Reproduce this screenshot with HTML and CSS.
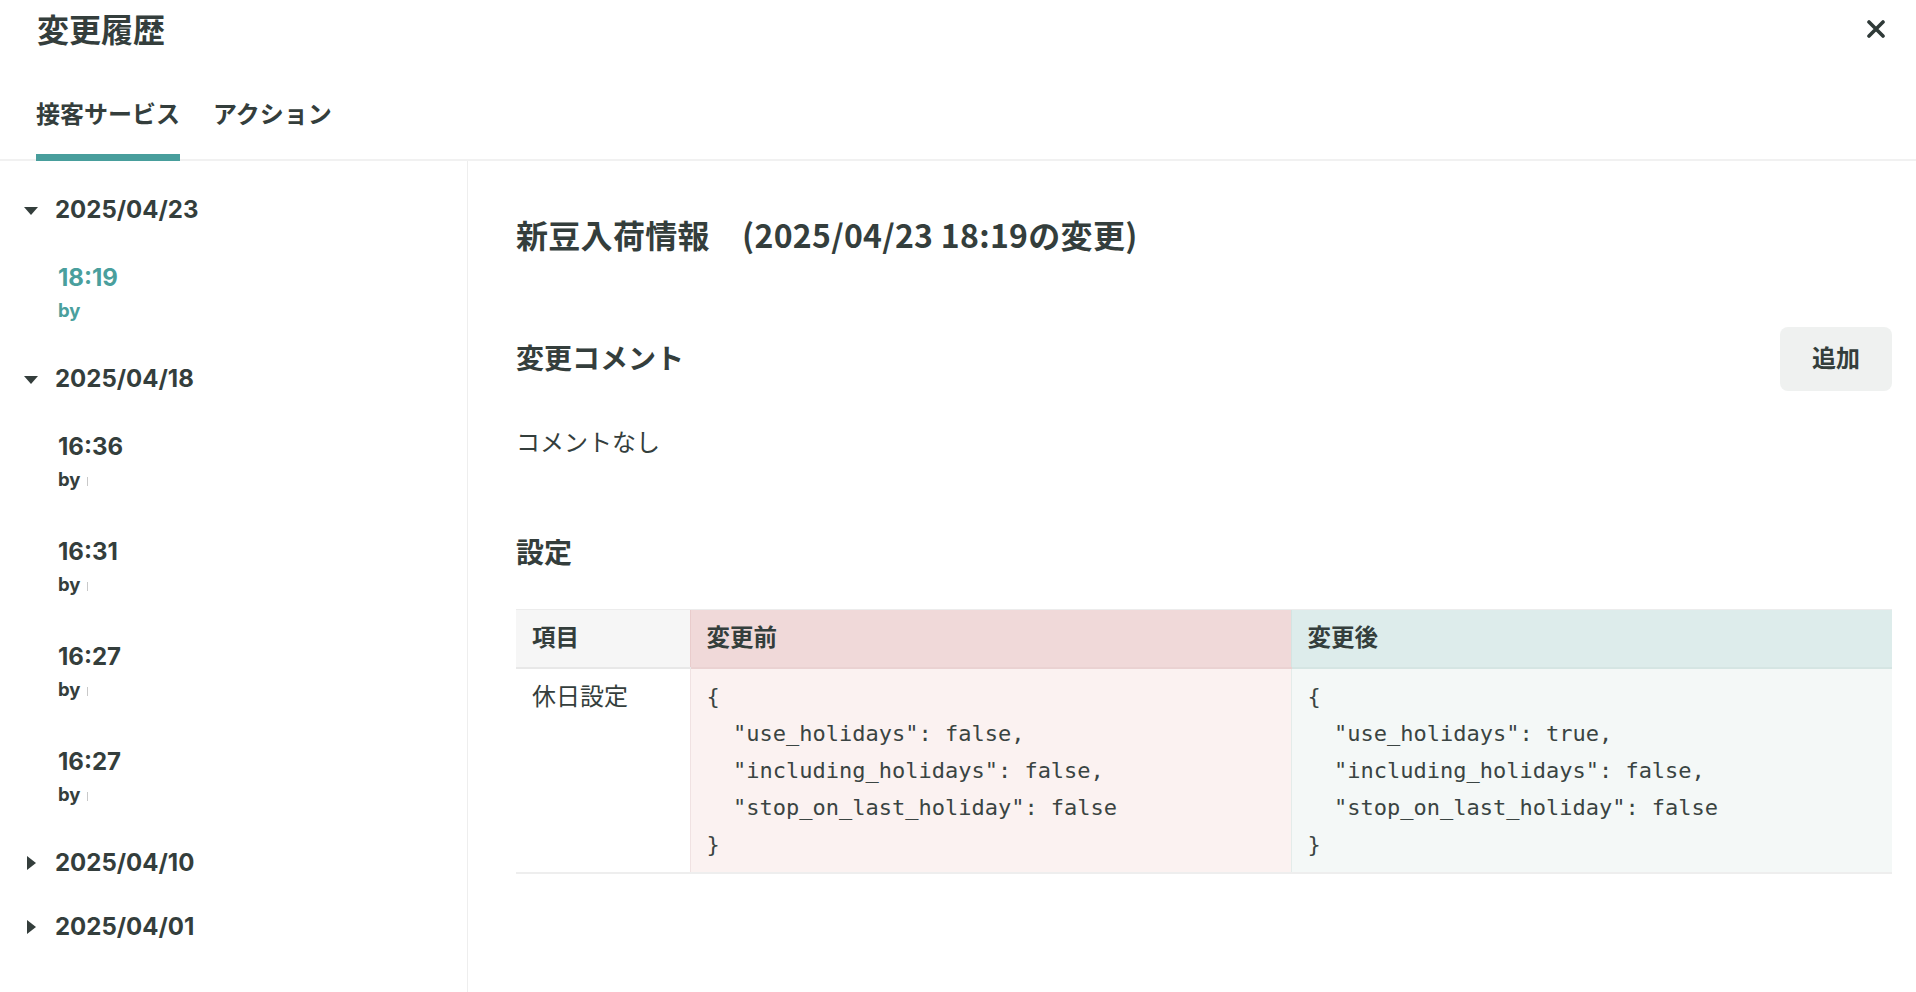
FILE: index.html
```html
<!DOCTYPE html>
<html lang="ja">
<head>
<meta charset="utf-8">
<title>変更履歴</title>
<link rel="stylesheet" href="styles.css">
</head>
<body>
<div class="panel">
  <header class="head">
    <div class="head-top">
      <h1 class="title">変更履歴</h1>
      <button class="close" type="button" aria-label="閉じる">
        <svg width="18" height="18" viewBox="0 0 18 18"><path d="M2 2 L16 16 M16 2 L2 16" stroke="#2f3a38" stroke-width="3.6" stroke-linecap="round" fill="none"/></svg>
      </button>
    </div>
    <nav class="tabs">
      <span class="tab active">接客サービス</span>
      <span class="tab">アクション</span>
    </nav>
  </header>
  <div class="content">
    <aside class="side">
      <div class="date"><span class="caret down"></span><span>2025/04/23</span></div>
      <div class="item current"><div class="time">18:19</div><div class="by">by</div></div>
      <div class="date"><span class="caret down"></span><span>2025/04/18</span></div>
      <div class="item"><div class="time">16:36</div><div class="by">by<span class="user"></span></div></div>
      <div class="item"><div class="time">16:31</div><div class="by">by<span class="user"></span></div></div>
      <div class="item"><div class="time">16:27</div><div class="by">by<span class="user"></span></div></div>
      <div class="item"><div class="time">16:27</div><div class="by">by<span class="user"></span></div></div>
      <div class="date"><span class="caret right"></span><span>2025/04/10</span></div>
      <div class="date"><span class="caret right"></span><span>2025/04/01</span></div>
    </aside>
    <main class="main">
      <h2 class="page-title">新豆入荷情報　(2025/04/23 18:19の変更)</h2>
      <div class="section-head">
        <h3 class="section-title">変更コメント</h3>
        <button class="btn" type="button">追加</button>
      </div>
      <p class="comment">コメントなし</p>
      <h3 class="section-title settings">設定</h3>
      <table class="diff">
        <colgroup><col class="c1"><col><col></colgroup>
        <thead>
          <tr><th class="h-item">項目</th><th class="h-before">変更前</th><th class="h-after">変更後</th></tr>
        </thead>
        <tbody>
          <tr>
            <td class="d-item">休日設定</td>
            <td class="d-before"><pre class="json">{
  "use_holidays": false,
  "including_holidays": false,
  "stop_on_last_holiday": false
}</pre></td>
            <td class="d-after"><pre class="json">{
  "use_holidays": true,
  "including_holidays": false,
  "stop_on_last_holiday": false
}</pre></td>
          </tr>
        </tbody>
      </table>
    </main>
  </div>
</div>
</body>
</html>
```

FILE: styles.css
```css
* { box-sizing: border-box; }
html, body { margin: 0; padding: 0; background: #fff; }
body {
  font-family: "Inter", "Noto Sans CJK JP", sans-serif;
  color: #343e3c;
}
.panel { display: flex; flex-direction: column; height: 100vh; }

.head { flex: none; }
.head-top {
  height: 58px;
  display: flex;
  align-items: center;
  justify-content: space-between;
  padding: 0 31px 0 37px;
}
.title {
  margin: 3px 0 0;
  font-size: 32px;
  font-weight: 700;
  line-height: 48px;
}
.close {
  border: 0;
  background: none;
  padding: 0;
  width: 18px;
  height: 18px;
  display: flex;
}
.tabs {
  display: flex;
  gap: 33px;
  padding: 0 0 0 36px;
  height: 103px;
  border-bottom: 2px solid #f1f1f1;
}
.tab {
  font-size: 24px;
  font-weight: 700;
  line-height: 36px;
  padding-top: 39px;
  color: #343e3c;
}
.tab.active {
  border-bottom: 7px solid #489e9c;
  margin-bottom: -2px;
}

.content { flex: 1; display: flex; min-height: 0; }
.side {
  width: 468px;
  flex: none;
  border-right: 1px solid #eeeeee;
  padding-top: 17px;
}
.date {
  height: 64px;
  display: flex;
  align-items: center;
  padding-left: 19px;
  font-size: 24px;
  font-weight: 700;
  line-height: 64px;
}
.caret {
  width: 24px;
  height: 24px;
  margin-right: 12px;
  display: flex;
  align-items: center;
  justify-content: center;
}
.caret::before {
  content: "";
  display: block;
  width: 0;
  height: 0;
}
.caret.down::before {
  border-left: 7.5px solid transparent;
  border-right: 7.5px solid transparent;
  border-top: 8px solid #343e3c;
  margin-top: 1px;
}
.caret.right::before {
  border-top: 7px solid transparent;
  border-bottom: 7px solid transparent;
  border-left: 9px solid #343e3c;
  margin-left: 0;
}
.item {
  height: 105px;
  padding: 20px 0 0 58px;
}
.time {
  font-size: 24px;
  font-weight: 700;
  line-height: 32px;
}
.by {
  font-size: 18.5px;
  font-weight: 700;
  line-height: 32px;
  display: flex;
  align-items: center;
}
.user {
  display: inline-block;
  width: 1px;
  height: 9px;
  background: #c9c9c9;
  margin-left: 7px;
  margin-top: 4px;
}
.item.current .time, .item.current .by { color: #4a9f9d; }

.main {
  flex: 1;
  min-width: 0;
  padding: 49px 24px 0 48px;
}
.page-title {
  margin: 0;
  font-family: "Noto Sans CJK JP", "Inter", sans-serif;
  font-size: 32px;
  font-weight: 700;
  line-height: 48px;
  letter-spacing: 0.3px;
}
.section-head {
  margin-top: 69px;
  display: flex;
  align-items: center;
  justify-content: space-between;
  height: 64px;
}
.section-title {
  margin: 0;
  font-size: 28px;
  font-weight: 700;
  line-height: 42px;
}
.btn {
  width: 112px;
  height: 64px;
  border: 0;
  border-radius: 8px;
  background: #eff1f0;
  font-family: "Inter", "Noto Sans CJK JP", sans-serif;
  font-size: 24px;
  font-weight: 700;
  line-height: 30px;
  color: #343e3c;
  padding: 0 0 1px;
}
.comment {
  margin: 34px 0 0;
  font-size: 24px;
  line-height: 36px;
  font-weight: 400;
}
.settings { margin-top: 71px; }

.diff {
  margin-top: 35px;
  width: 100%;
  table-layout: fixed;
  border-collapse: collapse;
  font-size: 23.5px;
}
.diff col.c1 { width: 174px; }
.diff th {
  height: 58px;
  text-align: left;
  font-weight: 700;
  padding: 0 16px;
  border-top: 1px solid #ececec;
  border-bottom: 2px solid #e8e8e8;
  line-height: 32px;
}
.h-item { background: #f6f6f6; }
.h-before { background: #f0d9d9; border-left: 1px solid #e9cccc; border-bottom-color: #ead2d2 !important; }
.h-after { background: #ddeceb; border-left: 1px solid #d3e4e2; border-bottom-color: #d5e5e3 !important; }
.diff td {
  vertical-align: top;
  padding: 9px 16px 9px;
  border-bottom: 2px solid #eeeeee;
}
.d-item { font-size: 24px; line-height: 37px; font-weight: 400; }
.d-before { background: #fbf2f1; border-left: 1px solid #f0e2e2; }
.d-after { background: #f4f8f7; border-left: 1px solid #e3ecea; }
.json {
  margin: 0;
  font-family: "DejaVu Sans Mono", "Liberation Mono", monospace;
  font-size: 22px;
  line-height: 37px;
  color: #3a4442;
  white-space: pre;
}
```
